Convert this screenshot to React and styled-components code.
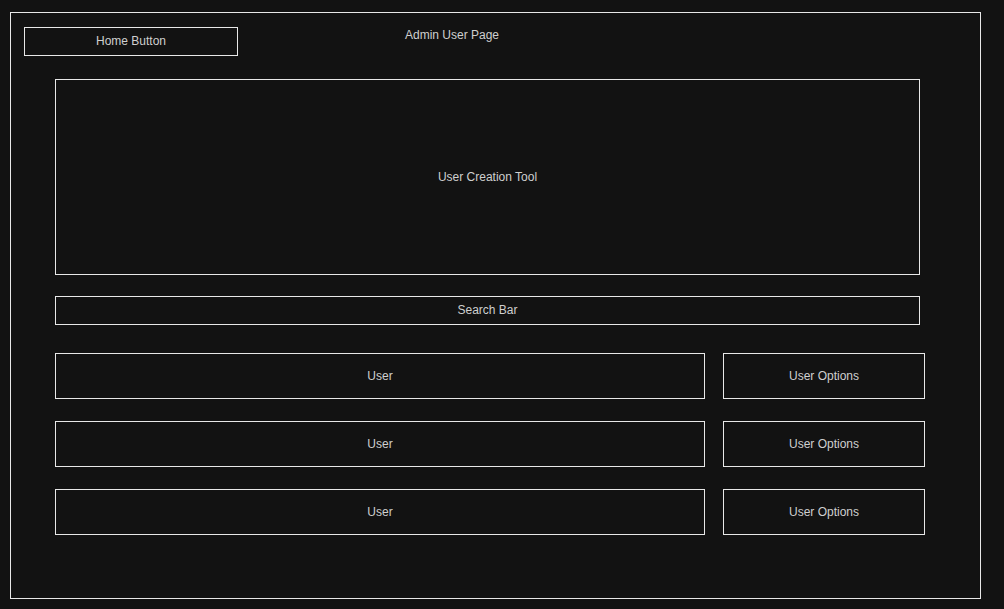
import React from 'react';
import styled, { createGlobalStyle } from 'styled-components';

const GlobalStyle = createGlobalStyle`
  html, body {
    margin: 0;
    padding: 0;
    background-color: #121212;
  }
  body {
    font-family: "Liberation Sans", Arial, sans-serif;
    font-size: 12px;
    color: #cfcfcf;
  }
  * {
    box-sizing: border-box;
  }
`;

const Frame = styled.div`
  margin: 12px 0 0 10px;
  width: 971px;
  height: 587px;
  border: 1px solid #e8e8e8;
  display: flex;
  flex-direction: column;
`;

const Header = styled.header`
  display: flex;
  align-items: flex-start;
  padding: 14px 0 0 13px;
`;

// outlined placeholder block, sized per use
const OutlineBox = styled.div`
  display: flex;
  align-items: center;
  justify-content: center;
  border: 1px solid #e8e8e8;
  width: ${props => props.w}px;
  height: ${props => props.h}px;
  flex-shrink: 0;
`;

const HomeButton = styled(OutlineBox)`
  padding-bottom: 2px;
`;

const Title = styled.div`
  margin-left: 167px;
  line-height: 14px;
  padding-top: 1px;
`;

const Content = styled.main`
  display: flex;
  flex-direction: column;
  margin: 23px 0 0 44px;
`;

const SearchBar = styled(OutlineBox)`
  margin-top: 21px;
  padding-bottom: 2px;
`;

const UserList = styled.div`
  display: flex;
  flex-direction: column;
  gap: 22px;
  margin-top: 28px;
`;

const UserRow = styled.div`
  display: flex;
  gap: 18px;
`;

const users = [1, 2, 3];

export default function App() {
  return (
    <>
      <GlobalStyle />
      <Frame>
        <Header>
          <HomeButton w={214} h={29}>Home Button</HomeButton>
          <Title>Admin User Page</Title>
        </Header>
        <Content>
          <OutlineBox w={865} h={196}>User Creation Tool</OutlineBox>
          <SearchBar w={865} h={29}>Search Bar</SearchBar>
          <UserList>
            {users.map(id => (
              <UserRow key={id}>
                <OutlineBox w={650} h={46}>User</OutlineBox>
                <OutlineBox w={202} h={46}>User Options</OutlineBox>
              </UserRow>
            ))}
          </UserList>
        </Content>
      </Frame>
    </>
  );
}
